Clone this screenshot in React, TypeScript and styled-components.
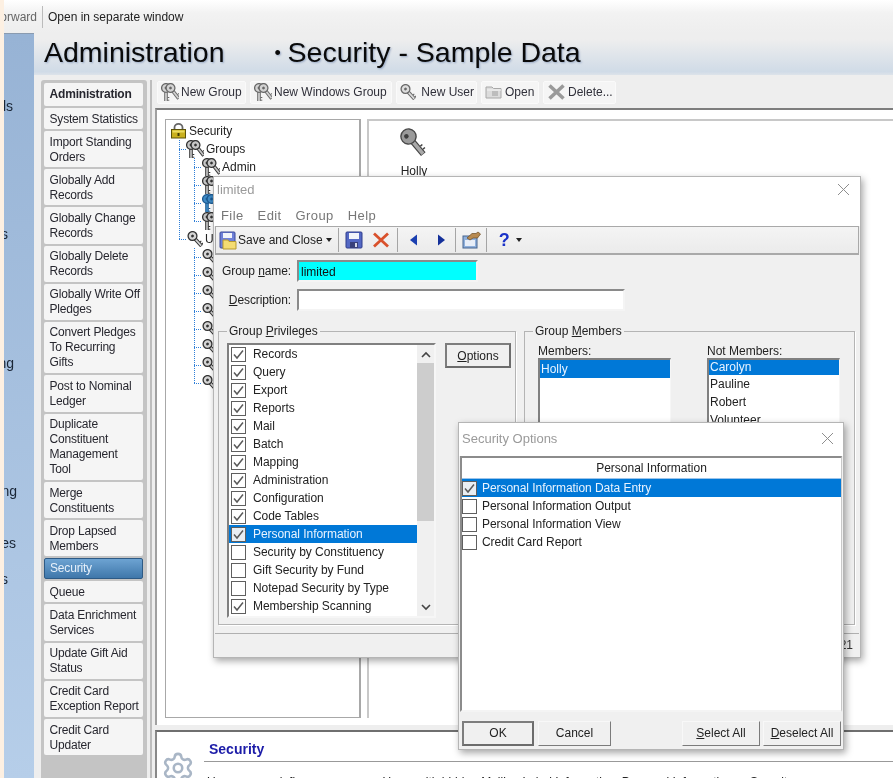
import React from "react";
import styled, { createGlobalStyle } from "styled-components";
import { Settings } from "lucide-react";

const Global = createGlobalStyle`
  html, body { margin: 0; padding: 0; background: #eee; }
  * { box-sizing: border-box; }
  body { font-family: "Liberation Sans", Arial, sans-serif; font-size: 12px; color: #222; }
`;

const Page = styled.div`
  position: relative; width: 893px; height: 778px; overflow: hidden; display: flex; background: #eee;
  filter: blur(0.35px);
`;
const Strip = styled.div`width: 4px; background: #fdf0e2; flex: none;`;
const Column = styled.div`flex: 1; min-width: 0; display: flex; flex-direction: column;`;
const TopBar = styled.div`
  height: 33px; flex: none; display: flex; align-items: center; font-size: 12px;
  background: linear-gradient(#fff, #f2f2f2 40%, #eee);
`;
const TopClip = styled.span`width: 34px; overflow: hidden; display: flex; justify-content: flex-end; color: #666; padding-right: 1px;`;
const TopDivider = styled.span`width: 1px; height: 22px; background: #bbb; margin: 0 5px 0 4px;`;
const Body = styled.div`flex: 1; display: flex; min-height: 0;`;
const Sidebar = styled.div`
  width: 30px; flex: none; display: flex; flex-direction: column; align-items: flex-end; overflow: hidden;
  background: linear-gradient(#97b3d5, #b6cee9); border-top: 1px solid #8a9bb0;
`;
const SideLabel = styled.div<{ $gap: number; $end: number }>`
  margin-top: ${p => p.$gap}px; margin-right: ${p => 34 - p.$end}px;
  font-size: 14px; color: #1a2636; line-height: 16px; white-space: nowrap; flex: none;
`;
const Main = styled.div`flex: 1; min-width: 0; display: flex; flex-direction: column;`;
const TitleBand = styled.div`
  height: 42px; flex: none; display: flex; align-items: center; padding: 0 0 3px 10px;
  background: linear-gradient(#eeeeee 15%, #d0dbe7 92%, #dde3ea);
`;
const Title = styled.h1`
  margin: 0; font-size: 28.5px; line-height: 34px; font-weight: 400; color: #0a0a0a; white-space: nowrap;
  text-shadow: 1px 1px 2px rgba(70, 100, 150, .45); font-family: "Liberation Sans", Arial, sans-serif;
`;
const TitleGap = styled.span`display: inline-block; width: 50px;`;
const Bullet = styled.span`display: inline-block; width: 13px; font-size: 18px; vertical-align: 3px;`;
const Workspace = styled.div`flex: 1; display: flex; min-height: 0; padding-left: 7px; background: #eee;`;
const NavRail = styled.nav`
  width: 106px; flex: none; background: #c4c4c4; padding: 3px 3px 0 3px; display: flex; flex-direction: column; gap: 2px;
  border-radius: 3px 3px 0 0; margin-top: 5px;
`;
const NavItem = styled.div<{ $lines?: number; $kind?: "head" | "active" }>`
  flex: none; padding: 3.5px 0 3px 5.5px; line-height: 15px; font-size: 12px; border-radius: 2px; width: 99px;
  white-space: pre; overflow: hidden; letter-spacing: -.18px;
  height: ${p => (p.$kind === "head" ? 23 : 21 + ((p.$lines ?? 1) - 1) * 15.2)}px;
  background: ${p => (p.$kind === "active" ? "linear-gradient(#6da3d2, #3f77aa)" : "#f5f5f5")};
  color: ${p => (p.$kind === "active" ? "#e6f0fa" : "#27272f")};
  font-weight: ${p => (p.$kind === "head" ? 700 : 400)};
  ${p => p.$kind === "active" && "border: 1px solid #2d5a85; padding: 2px 0 2px 5px;"}
  ${p => p.$kind === "head" && "padding-top: 4px;"}
`;
const Splitter = styled.div`
  width: 8px; flex: none; margin-top: 5px; display: flex; justify-content: center;
  &::after { content: ""; width: 2px; background: #bdbdbd; }
`;
const Content = styled.div`flex: 1; min-width: 0; display: flex; flex-direction: column;`;
const Toolbar = styled.div`height: 33px; flex: none; display: flex; gap: 4px; padding: 6px 0 0 2px; align-items: flex-start;`;
const ToolBtn = styled.div<{ $w: number }>`
  width: ${p => p.$w}px; height: 23px; display: flex; align-items: center; gap: 2px; padding: 0 0 2px 3px;
  background: #f5f5f5; border: 1px solid #fafafa; border-radius: 2px; white-space: nowrap; color: #30303a;
`;
const PanelFrame = styled.div`
  height: 617px; flex: none; background: #fff; border-top: 2px solid #7d7d7d; border-left: 2px solid #a0a0a0;
  padding: 9px 0 7px 8px; display: flex; gap: 6px;
`;
const TreePane = styled.div`
  width: 196px; flex: none; border: 1px solid #a8a8a8; border-width: 1px 2px 1px 1px; padding: 2px 0 0 0;
`;
const TreeRow = styled.div`height: 18px; display: flex; align-items: center; white-space: nowrap; color: #222;`;
const TreeIndent = styled.span<{ $w: number }>`width: ${p => p.$w}px; flex: none;`;
const Guide = styled.span<{ $line?: boolean }>`
  width: 15px; height: 18px; flex: none;
  background: ${p => (p.$line ? "repeating-linear-gradient(to bottom, #2f7fd8 0 1px, transparent 1px 2px) 0 0 / 1px 100% no-repeat" : "none")};
`;
const Elbow = styled.span<{ $end?: boolean; $w: number }>`
  width: ${p => p.$w}px; height: 18px; flex: none;
  background:
    repeating-linear-gradient(to bottom, #2f7fd8 0 1px, transparent 1px 2px) 0 0 / 1px ${p => (p.$end ? "9px" : "100%")} no-repeat,
    repeating-linear-gradient(to right, #2f7fd8 0 1px, transparent 1px 2px) 0 9px / 100% 1px no-repeat;
`;
const TreeText = styled.span`margin-left: 2px;`;
const DetailPane = styled.div`
  flex: 1; border-top: 2px solid #c8c8c8; border-left: 2px solid #c8c8c8; padding: 7px 0 0 31px;
  display: flex; flex-direction: column; align-items: flex-start; overflow: hidden;
`;
const DetailItem = styled.div`display: flex; flex-direction: column; align-items: center; gap: 6px;`;
const InfoPanel = styled.section`
  flex: 1; margin-top: 5px; background: #fff; border-top: 2px solid #6f6f6f; border-left: 2px solid #888;
  display: flex; padding: 8px 0 0 4px; overflow: hidden;
`;
const GearCell = styled.div`width: 43px; flex: none; padding-top: 11px; color: #a9b6c6;`;
const InfoBody = styled.div`flex: 1; min-width: 0;`;
const InfoTitle = styled.h2`
  margin: 0; padding: 1px 0 3px 5px; font-size: 14px; line-height: 17px; font-weight: 700; color: #1c1ca8;
  border-bottom: 1px solid #999; font-family: "Liberation Sans", Arial, sans-serif;
`;
const InfoText = styled.p`margin: 13px 0 0 3px; font-size: 12px; line-height: 15px; white-space: nowrap; color: #222;`;

const Win = styled.div<{ $left: number; $top: number; $w: number; $h: number }>`
  position: absolute; left: ${p => p.$left}px; top: ${p => p.$top}px; width: ${p => p.$w}px; height: ${p => p.$h}px;
  background: #f0f0f0; display: flex; flex-direction: column; border: 1px solid #b5b5b5;
  box-shadow: 2px 3px 7px rgba(0, 0, 0, .35);
`;
const WinTitle = styled.div<{ $h: number; $pb: number; $pr: number }>`
  height: ${p => p.$h}px; flex: none; background: #fff; display: flex; align-items: center; justify-content: space-between;
  padding: 0 ${p => p.$pr}px ${p => p.$pb}px 3px; font-size: 13px; color: #9a9a9a;
`;
const MenuBar = styled.div`
  height: 22px; flex: none; background: #fff; display: flex; align-items: center; padding-left: 7px; gap: 14px;
  font-size: 13px; letter-spacing: .4px; color: #777;
`;
const DlgToolbar = styled.div`
  height: 29px; flex: none; margin: 0 1px; display: flex; align-items: center; padding-left: 3px;
  background: linear-gradient(#f4f4f4, #ebebeb); border: 1px solid #a9a9a9; border-width: 1px 1px 2px 1px; font-size: 12px; color: #222;
`;
const TbSep = styled.span<{ $l: number; $r: number }>`
  width: 1px; height: 24px; background: #a5a5a5; margin: 0 ${p => p.$r}px 0 ${p => p.$l}px; flex: none;
`;
const Caret = styled.span<{ $l: number }>`
  margin-left: ${p => p.$l}px; width: 0; height: 0; border: 3.5px solid transparent; border-top: 4px solid #222; border-bottom: 0; flex: none;
`;
const Help = styled.span`color: #1a32c8; font-size: 18px; font-weight: 700; margin-left: 12px; line-height: 18px;`;
const FormBody = styled.div`flex: 1; min-height: 0; display: flex; flex-direction: column; padding-top: 5px;`;
const FieldRow = styled.div<{ $mb: number }>`display: flex; align-items: center; height: 22px; margin-bottom: ${p => p.$mb}px;`;
const FieldLabel = styled.label`width: 77px; text-align: right; margin-right: 6px; color: #222; white-space: nowrap; letter-spacing: -.1px;`;
const Key = styled.span`text-decoration: underline;`;
const TextInput = styled.div<{ $w: number; $bg: string }>`
  width: ${p => p.$w}px; height: 22px; background: ${p => p.$bg}; padding: 3px 2px; line-height: 15px; color: #111;
  border: 2px solid; border-color: #8a8a8a #f4f4f4 #f4f4f4 #8a8a8a;
`;
const Groups = styled.div`display: flex; gap: 8px; padding-left: 4px; margin-top: 1px;`;
const GroupBox = styled.fieldset<{ $w: number; $h: number }>`
  margin: 0; width: ${p => p.$w}px; height: ${p => p.$h}px; border: 1px solid #b4b4b4; padding: 0; min-inline-size: 0; display: block;
  box-shadow: 1px 1px 0 #fff;
`;
const GroupLegend = styled.legend`margin-left: 8px; padding: 0 2px; font-size: 12px; line-height: 14px; color: #222;`;
const PrivLayout = styled.div`display: flex; align-items: flex-start; padding: 5px 0 0 8px; gap: 9px;`;
const ListFrame = styled.div`
  width: 209px; height: 275px; display: flex; background: #fff; border: 2px solid; border-color: #808080 #f6f6f6 #f6f6f6 #808080;
  overflow: hidden;
`;
const ListItems = styled.div`flex: 1; min-width: 0;`;
const CheckRow = styled.div<{ $sel?: boolean; $pad: number; $gap: number }>`
  height: 18px; display: flex; align-items: center; gap: ${p => p.$gap}px; padding-left: ${p => p.$pad}px; white-space: nowrap;
  letter-spacing: -.05px;
  background: ${p => (p.$sel ? "#0078d7" : "transparent")}; color: ${p => (p.$sel ? "#e8f3ff" : "#222")};
`;
const CheckBox = styled.span<{ $sel?: boolean }>`
  width: 15px; height: 15px; flex: none; border: 1px solid #5f5f5f; display: flex; align-items: center; justify-content: center;
  background: ${p => (p.$sel ? "#e9eef3" : "#fff")};
`;
const ScrollBar = styled.div`width: 17px; flex: none; display: flex; flex-direction: column; background: #f0f0f0;`;
const ScrollEnd = styled.div`height: 18px; flex: none; display: flex; align-items: center; justify-content: center;`;
const ScrollThumb = styled.div`height: 158px; flex: none; background: #cdcdcd;`;
const ScrollSpace = styled.div`flex: 1;`;
const DlgBtn = styled.div<{ $w: number; $default?: boolean }>`
  width: ${p => p.$w}px; height: 25px; flex: none; display: flex; align-items: center; justify-content: center; color: #222; background: #f0f0f0;
  border: 1px solid; border-color: #f8f8f8 #7b7b7b #7b7b7b #f8f8f8;
  ${p => p.$default && "border: 2px solid; border-color: #7d7d7d #6c6c6c #6c6c6c #7d7d7d;"}
`;
const MembersLayout = styled.div`display: flex; padding: 0 0 0 13px; gap: 36px; margin-top: 5px;`;
const MemberCol = styled.div`display: flex; flex-direction: column;`;
const MemberLabel = styled.div`height: 15px; line-height: 16px; color: #222;`;
const MemberList = styled.div`
  width: 133px; height: 253px; background: #fff; border: 2px solid; border-right-width: 1px; border-color: #808080 #f6f6f6 #f6f6f6 #808080;
`;
const MemberRow = styled.div<{ $sel?: boolean; $h: number }>`
  height: ${p => p.$h}px; line-height: ${p => p.$h}px; padding-left: 1px;
  background: ${p => (p.$sel ? "#0078d7" : "transparent")}; color: ${p => (p.$sel ? "#e8f3ff" : "#222")};
`;
const StatusBar = styled.div`
  height: 23px; flex: none; margin: 8px 1px 0; border-top: 1px solid #b0b0b0; display: flex; align-items: center; justify-content: flex-end;
  padding-right: 6px; color: #333;
`;
const OptionsList = styled.div`
  flex: 1; min-height: 0; margin: 0 1px; background: #fff; border: 2px solid; border-right-width: 1px; border-color: #8c8c8c #c8c8c8 #f4f4f4 #8c8c8c;
`;
const OptionsHeader = styled.div`height: 21px; line-height: 21px; text-align: center; color: #222; border-bottom: 1px solid #9cc4ea;`;
const Footer = styled.div`height: 37px; flex: none; display: flex; align-items: center; padding: 5px 3px 0 3px;`;
const FooterGap = styled.span<{ $w: number }>`width: ${p => p.$w}px; flex: none;`;

const KeyShape = ({ x, y, a, tone = "#c6c6c6", ink = "#333" }: { x: number; y: number; a: number; tone?: string; ink?: string }) => (
  <g transform={`translate(${x} ${y}) rotate(${a})`}>
    <path d="M0 3V13.5" stroke={ink} strokeWidth="3.6" fill="none" />
    <path d="M0 3V13" stroke={tone} strokeWidth="1.7" fill="none" />
    <path d="M1.5 9.5h1.8M1.5 12.2h1.8" stroke={ink} strokeWidth="1" />
    <circle r="4.4" fill={tone} stroke={ink} strokeWidth="1.3" />
    <circle r="1.4" fill={ink} />
  </g>
);
const KeysIcon = ({ tone, ink, soft }: { tone?: string; ink?: string; soft?: boolean }) => (
  <svg width="18" height="18" viewBox="0 0 18 18" style={{ flex: "none", opacity: soft ? 0.72 : 1 }}>
    <KeyShape x={5} y={5} a={0} tone={tone} ink={ink} />
    <KeyShape x={9.5} y={5} a={-38} tone={tone} ink={ink} />
  </svg>
);
const UserKey = ({ soft }: { soft?: boolean }) => (
  <svg width="16" height="16" viewBox="0 0 16 16" style={{ flex: "none", opacity: soft ? 0.72 : 1 }}>
    <KeyShape x={5.5} y={5} a={-42} tone="#d5d5d5" />
  </svg>
);
const LockIcon = () => (
  <svg width="17" height="16" viewBox="0 0 17 16" style={{ flex: "none" }}>
    <path d="M4.5 7V4.5a4 3.6 0 0 1 8 0V7" fill="none" stroke="#666" strokeWidth="1.8" />
    <rect x="1.5" y="6.5" width="14" height="8.5" fill="#c9b01e" stroke="#5c5208" />
    <rect x="2.5" y="7.5" width="12" height="2" fill="#ecdc62" />
    <rect x="7.5" y="10" width="2" height="3" fill="#3f3804" />
  </svg>
);
const BigKey = () => (
  <svg width="28" height="30" viewBox="0 0 28 30">
    <g transform="translate(8.5 8.5) rotate(-40)">
      <path d="M0 4V23" stroke="#444" strokeWidth="6" />
      <path d="M0 4V22.5" stroke="#a9a9a9" strokeWidth="3.6" />
      <path d="M3 15h2.5M3 19h2.5" stroke="#444" strokeWidth="1.5" />
      <circle r="7.6" fill="#9b9b9b" stroke="#4a4a4a" strokeWidth="1.4" />
      <circle cx="-1.5" cy="-1.5" r="2.3" fill="#3f3f3f" />
    </g>
  </svg>
);
const OpenIcon = () => (
  <svg width="18" height="16" viewBox="0 0 18 16" style={{ flex: "none" }}>
    <path d="M1 3h6l1.5 1.5H16V14H1z" fill="#dcdcdc" stroke="#a8a8a8" />
    <path d="M2 6h14" stroke="#f4f4f4" />
    <rect x="7" y="7" width="6" height="5" fill="#bdbdbd" />
  </svg>
);
const GrayX = () => (
  <svg width="19" height="18" viewBox="0 0 19 18" style={{ flex: "none" }}>
    <path d="M2.5 2.5 16.5 15.5M16.5 2.5 2.5 15.5" stroke="#9a9a9a" strokeWidth="3.6" />
  </svg>
);
const RedX = () => (
  <svg width="18" height="18" viewBox="0 0 18 18" style={{ flex: "none", marginLeft: 9 }}>
    <path d="M2 2.5 16 15.5M16 2.5 2 15.5" stroke="#d9512c" strokeWidth="2.8" />
  </svg>
);
const Floppy = () => (
  <svg width="18" height="18" viewBox="0 0 18 18" style={{ flex: "none" }}>
    <rect x="1" y="1" width="16" height="16" rx="1" fill="#5468c4" stroke="#2f3c8c" />
    <rect x="4" y="2" width="10" height="6" fill="#f2f4fa" />
    <rect x="5" y="11" width="8" height="6" fill="#38407a" />
    <rect x="10" y="12" width="2" height="4" fill="#d5d9e8" />
  </svg>
);
const SaveClose = () => (
  <svg width="18" height="19" viewBox="0 0 18 19" style={{ flex: "none", marginRight: 1 }}>
    <rect x="1" y="1" width="15" height="16" rx="1" fill="#6f80d8" stroke="#3d4a9a" />
    <rect x="4" y="2" width="9" height="5" fill="#f2f4fa" />
    <path d="M4 9h5l1 1.5h7V18H4z" fill="#f4dc72" stroke="#b79a2e" />
  </svg>
);
const Tri = ({ dir, ml }: { dir: "l" | "r"; ml: number }) => (
  <svg width="9" height="12" viewBox="0 0 9 12" style={{ flex: "none", marginLeft: ml }}>
    <path d={dir === "l" ? "M8 0.5V11.5L1 6Z" : "M1 0.5V11.5L8 6Z"} fill={dir === "l" ? "#1a3fb0" : "#14309a"} />
  </svg>
);
const PropsIcon = () => (
  <svg width="19" height="18" viewBox="0 0 19 18" style={{ flex: "none" }}>
    <rect x="1" y="5" width="14" height="12" fill="#8fb0dc" stroke="#46648f" />
    <rect x="3" y="9" width="10" height="6" fill="#e8eef8" />
    <path d="M5 7 10 2.5h4l2-1.5 2.5 2-3 4H11L8 9Z" fill="#b88a50" stroke="#6b4a20" strokeWidth=".7" />
  </svg>
);
const CloseX = () => (
  <svg width="13" height="13" viewBox="0 0 13 13" style={{ flex: "none" }}>
    <path d="M1 1 12 12M12 1 1 12" stroke="#8e8e8e" strokeWidth="1" />
  </svg>
);
const Tick = () => (
  <svg width="13" height="13" viewBox="0 0 13 13">
    <path d="M2 6.5 5 10 11 2.5" fill="none" stroke="#5a5a5a" strokeWidth="1.5" />
  </svg>
);
const Chevron = ({ up }: { up?: boolean }) => (
  <svg width="10" height="7" viewBox="0 0 10 7">
    <path d={up ? "M1 6 5 2 9 6" : "M1 1 5 5 9 1"} fill="none" stroke="#444" strokeWidth="1.6" />
  </svg>
);

const sideLabels: [string, number, number][] = [["Tools", 64, 13], ["Records", 112, 8], ["Mailing", 113, 14], ["Marketing", 112, 17], ["Sales", 36, 16], ["Options", 20, 8]];
const nav: { t: string; l?: number; k?: "head" | "active" }[] = [
  { t: "Administration", k: "head" },
  { t: "System Statistics" },
  { t: "Import Standing\nOrders", l: 2 },
  { t: "Globally Add\nRecords", l: 2 },
  { t: "Globally Change\nRecords", l: 2 },
  { t: "Globally Delete\nRecords", l: 2 },
  { t: "Globally Write Off\nPledges", l: 2 },
  { t: "Convert Pledges\nTo Recurring\nGifts", l: 3 },
  { t: "Post to Nominal\nLedger", l: 2 },
  { t: "Duplicate\nConstituent\nManagement\nTool", l: 4 },
  { t: "Merge\nConstituents", l: 2 },
  { t: "Drop Lapsed\nMembers", l: 2 },
  { t: "Security", k: "active" },
  { t: "Queue" },
  { t: "Data Enrichment\nServices", l: 2 },
  { t: "Update Gift Aid\nStatus", l: 2 },
  { t: "Credit Card\nException Report", l: 2 },
  { t: "Credit Card\nUpdater", l: 2 },
];
const privileges: [string, boolean][] = [
  ["Records", true], ["Query", true], ["Export", true], ["Reports", true], ["Mail", true], ["Batch", true], ["Mapping", true],
  ["Administration", true], ["Configuration", true], ["Code Tables", true], ["Personal Information", true],
  ["Security by Constituency", false], ["Gift Security by Fund", false], ["Notepad Security by Type", false], ["Membership Scanning", true],
];
const options = ["Personal Information Data Entry", "Personal Information Output", "Personal Information View", "Credit Card Report"];

export default function App() {
  return (
    <>
      <Global />
      <Page>
        <Strip />
        <Column>
          <TopBar>
            <TopClip>orward</TopClip>
            <TopDivider />
            Open in separate window
          </TopBar>
          <Body>
            <Sidebar>
              {sideLabels.map(([t, g, e]) => <SideLabel key={t} $gap={g} $end={e}>{t}</SideLabel>)}
            </Sidebar>
            <Main>
              <TitleBand>
                <Title>Administration<TitleGap /><Bullet>•</Bullet>Security - Sample Data</Title>
              </TitleBand>
              <Workspace>
                <NavRail>
                  {nav.map(n => <NavItem key={n.t} $lines={n.l} $kind={n.k}>{n.t}</NavItem>)}
                </NavRail>
                <Splitter />
                <Content>
                  <Toolbar>
                    <ToolBtn $w={89}><KeysIcon soft />New Group</ToolBtn>
                    <ToolBtn $w={142}><KeysIcon soft />New Windows Group</ToolBtn>
                    <ToolBtn $w={81}><UserKey soft />&nbsp;New User</ToolBtn>
                    <ToolBtn $w={58}><OpenIcon />Open</ToolBtn>
                    <ToolBtn $w={73}><GrayX />Delete...</ToolBtn>
                  </Toolbar>
                  <PanelFrame>
                    <TreePane>
                      <TreeRow><TreeIndent $w={4} /><LockIcon /><TreeText>Security</TreeText></TreeRow>
                      <TreeRow><TreeIndent $w={13} /><Elbow $w={7} /><KeysIcon /><TreeText>Groups</TreeText></TreeRow>
                      <TreeRow><TreeIndent $w={13} /><Guide $line /><Elbow $w={8} /><KeysIcon /><TreeText>Admin</TreeText></TreeRow>
                      <TreeRow><TreeIndent $w={13} /><Guide $line /><Elbow $w={8} /><KeysIcon /><TreeText>Full</TreeText></TreeRow>
                      <TreeRow><TreeIndent $w={13} /><Guide $line /><Elbow $w={8} /><KeysIcon tone="#3f8ac4" ink="#1c5a92" /><TreeText>limited</TreeText></TreeRow>
                      <TreeRow><TreeIndent $w={13} /><Guide $line /><Elbow $w={8} $end /><KeysIcon /><TreeText>Read</TreeText></TreeRow>
                      <TreeRow><TreeIndent $w={13} /><Elbow $w={8} $end /><UserKey /><TreeText>Users</TreeText></TreeRow>
                      {["Admin", "Carolyn", "Holly", "Pauline", "Robert", "Supervisor", "User", "Volunteer"].map((u, i) => (
                        <TreeRow key={u}><TreeIndent $w={13} /><Guide /><Elbow $w={8} $end={i === 7} /><UserKey /><TreeText>{u}</TreeText></TreeRow>
                      ))}
                    </TreePane>
                    <DetailPane>
                      <DetailItem><BigKey />Holly</DetailItem>
                    </DetailPane>
                  </PanelFrame>
                  <InfoPanel>
                    <GearCell><Settings size={34} strokeWidth={1.8} /></GearCell>
                    <InfoBody>
                      <InfoTitle>Security</InfoTitle>
                      <InfoText>User groups define user access. Users with hidden Mailing Label Information, Personal Information or Security</InfoText>
                    </InfoBody>
                  </InfoPanel>
                </Content>
              </Workspace>
            </Main>
          </Body>
        </Column>

        <Win $left={213} $top={176} $w={648} $h={482}>
          <WinTitle $h={27} $pb={2} $pr={10}>limited<CloseX /></WinTitle>
          <MenuBar><span>File</span><span>Edit</span><span>Group</span><span>Help</span></MenuBar>
          <DlgToolbar>
            <SaveClose />Save and Close
            <Caret $l={3} />
            <TbSep $l={6} $r={6} />
            <Floppy />
            <RedX />
            <TbSep $l={7} $r={0} />
            <Tri dir="l" ml={11} />
            <Tri dir="r" ml={19} />
            <TbSep $l={9} $r={6} />
            <PropsIcon />
            <TbSep $l={5} $r={0} />
            <Help>?</Help>
            <Caret $l={6} />
          </DlgToolbar>
          <FormBody>
            <FieldRow $mb={7}><FieldLabel>Group <Key>n</Key>ame:</FieldLabel><TextInput $w={181} $bg="#00ffff">limited</TextInput></FieldRow>
            <FieldRow $mb={12}><FieldLabel><Key>D</Key>escription:</FieldLabel><TextInput $w={328} $bg="#fff" /></FieldRow>
            <Groups>
              <GroupBox $w={298} $h={301}>
                <GroupLegend>Group <Key>P</Key>rivileges</GroupLegend>
                <PrivLayout>
                  <ListFrame>
                    <ListItems>
                      {privileges.map(([t, c]) => {
                        const sel = t === "Personal Information";
                        return (
                          <CheckRow key={t} $sel={sel} $pad={2} $gap={7}>
                            <CheckBox $sel={sel}>{c && <Tick />}</CheckBox>{t}
                          </CheckRow>
                        );
                      })}
                    </ListItems>
                    <ScrollBar>
                      <ScrollEnd><Chevron up /></ScrollEnd>
                      <ScrollThumb />
                      <ScrollSpace />
                      <ScrollEnd><Chevron /></ScrollEnd>
                    </ScrollBar>
                  </ListFrame>
                  <DlgBtn $w={66} $default><span><Key>O</Key>ptions</span></DlgBtn>
                </PrivLayout>
              </GroupBox>
              <GroupBox $w={331} $h={301}>
                <GroupLegend>Group <Key>M</Key>embers</GroupLegend>
                <MembersLayout>
                  <MemberCol>
                    <MemberLabel>Members:</MemberLabel>
                    <MemberList><MemberRow $sel $h={18}>Holly</MemberRow></MemberList>
                  </MemberCol>
                  <MemberCol>
                    <MemberLabel>Not Members:</MemberLabel>
                    <MemberList>
                      <MemberRow $sel $h={15}>Carolyn</MemberRow>
                      <MemberRow $h={18}>Pauline</MemberRow>
                      <MemberRow $h={18}>Robert</MemberRow>
                      <MemberRow $h={18}>Volunteer</MemberRow>
                    </MemberList>
                  </MemberCol>
                </MembersLayout>
              </GroupBox>
            </Groups>
            <StatusBar>1 of 21</StatusBar>
          </FormBody>
        </Win>

        <Win $left={458} $top={422} $w={386} $h={328}>
          <WinTitle $h={33} $pb={3} $pr={9}>Security Options<CloseX /></WinTitle>
          <OptionsList>
            <OptionsHeader>Personal Information</OptionsHeader>
            {options.map((t, i) => (
              <CheckRow key={t} $sel={i === 0} $pad={0} $gap={5}>
                <CheckBox $sel={i === 0}>{i === 0 && <Tick />}</CheckBox>{t}
              </CheckRow>
            ))}
          </OptionsList>
          <Footer>
            <DlgBtn $w={72} $default>OK</DlgBtn>
            <FooterGap $w={4} />
            <DlgBtn $w={73}>Cancel</DlgBtn>
            <FooterGap $w={71} />
            <DlgBtn $w={78}><span><Key>S</Key>elect All</span></DlgBtn>
            <FooterGap $w={3} />
            <DlgBtn $w={78}><span><Key>D</Key>eselect All</span></DlgBtn>
          </Footer>
        </Win>
      </Page>
    </>
  );
}
